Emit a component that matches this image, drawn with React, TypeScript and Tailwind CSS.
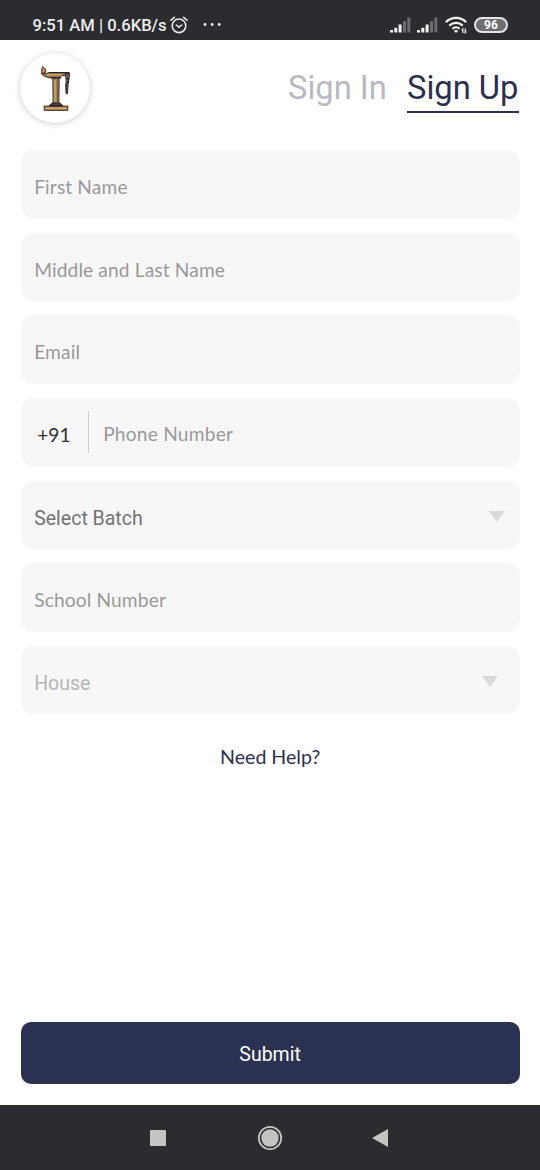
import type { ReactNode } from 'react';

function Signal() {
  return (
    <svg width="21" height="16" viewBox="0 0 21 16">
      <g fill="#f2f2f3">
        <rect x="0" y="13" width="3" height="2.5" />
        <rect x="4.3" y="10.8" width="3" height="4.7" />
        <rect x="8.6" y="7.5" width="3" height="8" />
      </g>
      <g fill="#6a6b6f">
        <rect x="13" y="4" width="3" height="11.5" />
        <rect x="17.3" y="0.5" width="3" height="15" />
      </g>
    </svg>
  );
}

function StatusBar() {
  return (
    <div className="flex h-10 shrink-0 items-center bg-[#2b2c30] pt-[10px] pl-[32.5px] text-[#ececee]">
      <span className="w-[134px] pt-[2px] whitespace-nowrap font-['Roboto',sans-serif] text-[16.6px] leading-5 font-medium">
        9:51 AM | 0.6KB/s
      </span>
      <svg className="ml-[3.5px]" width="18" height="18" viewBox="0 0 18 18" fill="none" stroke="#e6e6e8" strokeWidth="1.6" strokeLinecap="round">
        <circle cx="9" cy="9.8" r="6.8" />
        <path d="M1 4.2 4.4 1.3M17 4.2l-3.4-2.9M6.3 9 9 11.2 11.7 9" />
      </svg>
      <svg className="ml-[15px]" width="20" height="18" viewBox="0 0 20 18" fill="#ececee">
        <circle cx="2" cy="8.5" r="1.4" />
        <circle cx="9.2" cy="8.5" r="1.4" />
        <circle cx="16.2" cy="8.5" r="1.4" />
      </svg>
      <div className="ml-auto flex items-center">
        <Signal />
        <span className="w-[6px]" />
        <Signal />
        <svg className="ml-[7px]" width="23" height="18" viewBox="0 0 23 18" fill="none" stroke="#f2f2f3" strokeWidth="2.2">
          <path d="M0.8 6.2C6.6.5 15.5.5 21.2 6.2" />
          <path d="M4.3 9.6c4-3.7 9.6-3.7 13.4 0" />
          <path d="M7.5 12.8c2-2 5-2 7 0" />
          <path d="m11 16.9-2.2-2.2c1.2-1 3.2-1 4.4 0z" fill="#f2f2f3" stroke="none" />
          <path d="M17.8 17v-4l-1 1.3M20.2 12.5v4.2l1-1.3" strokeWidth="1.2" />
        </svg>
        <div className="mr-8 ml-[6px] flex h-4 w-[34px] items-center justify-center rounded-full border-2 border-[#e4e4e6] bg-[#6d6e72] font-['Roboto',sans-serif] text-[12px] leading-none font-bold text-white">
          96
        </div>
      </div>
    </div>
  );
}

function Logo() {
  return (
    <div className="mt-[13px] flex size-[70px] items-center justify-center rounded-full bg-white shadow-[0_1px_6px_rgba(0,0,0,0.2)]">
      <svg width="32" height="46" viewBox="0 0 32 46">
        <g stroke="#30242a" strokeWidth="0.9" strokeLinejoin="round">
          <path d="M3.2 8.2C1.8 5.8 3 4.2 3.6 1.5 5 3.6 5.2 4.4 6.4 3.6 7.2 5.5 6.6 7 6 8.2z" fill="#c98a4e" />
          <path d="M2 8.4h5.5L9.5 7.5h20.8v3.2H22l-2 2.2H11C7.5 12.4 4 11 2 8.4z" fill="#a07d4e" />
          <path d="M26.3 8.5h4.2l-.6 6.5-.8 4.5-.6 9-1.3.5-.5-8.5.5-5z" fill="#6e5d52" />
          <path d="M13.8 13h6.4l-.3 25h-5.8z" fill="#a5834f" />
          <path d="M11 40.3 13 38h8l2 2.3z" fill="#58443d" />
          <path d="M5.2 41h23.6v4.4H5.2z" fill="#b28c53" />
        </g>
        <path d="M16.1 15v22" stroke="#c8a871" strokeWidth="1.4" />
        <path d="M18.8 14v24" stroke="#6b5140" strokeWidth="1" />
        <path d="M8 9.6h15M7 43.4h20" stroke="#d0a768" strokeWidth="1.1" />
        <path d="M10 40.8h14M11.5 12.6h11M10 7.6h20" stroke="#29232d" strokeWidth="1.4" />
        <path d="M29 12.5v6M27.6 19.5v8" stroke="#2c2935" strokeWidth="1.7" strokeDasharray="2.4 1" />
      </svg>
    </div>
  );
}

function Field({ children }: { children: ReactNode }) {
  return (
    <div className="flex h-[68.6px] items-center rounded-[13px] bg-[#f7f7f7] pl-[13.6px] text-[19.2px] leading-6">
      {children}
    </div>
  );
}

function Placeholder({ children }: { children: ReactNode }) {
  return <span className="mt-[5px] font-['Lato',sans-serif] tracking-[0.12px] text-[#999]">{children}</span>;
}

function Caret() {
  return (
    <svg width="16" height="11" viewBox="0 0 16 11" fill="#d9d9d9">
      <path d="M0 0h16L8 11z" />
    </svg>
  );
}

export default function App() {
  return (
    <div className="flex h-[1170px] w-[540px] flex-col overflow-hidden bg-white">
      <StatusBar />
      <header className="flex h-[110.3px] shrink-0 items-start justify-between pr-[21px] pl-5 font-['Roboto',sans-serif]">
        <Logo />
        <nav className="flex gap-[21px] pt-[28px] text-[32.7px] leading-10 whitespace-nowrap">
          <span className="w-[98px] text-[#b8b9c3]">Sign In</span>
          <span className="h-[45px] w-[112px] border-b-2 border-[#2b3050] text-[#2b3050]">Sign Up</span>
        </nav>
      </header>
      <main className="flex flex-1 flex-col pr-[20.4px] pl-[20.6px]">
        <div className="flex flex-col gap-[14px]">
          <Field><Placeholder>First Name</Placeholder></Field>
          <Field><Placeholder>Middle and Last Name</Placeholder></Field>
          <Field><Placeholder>Email</Placeholder></Field>
          <Field>
            <span className="mt-[6px] ml-[3px] w-[51px] font-['Lato',sans-serif] text-[#303030]">+91</span>
            <span className="h-[42px] w-px bg-[#cccccc]" />
            <span className="mt-[3px] ml-[14px] font-['Lato',sans-serif] tracking-[0.2px] text-[#999]">Phone Number</span>
          </Field>
          <Field>
            <span className="mt-[8px] flex-1 font-['Roboto',sans-serif] text-[19.5px] text-[#737373]">Select Batch</span>
            <span className="mt-[3px] mr-[15px]"><Caret /></span>
          </Field>
          <Field><Placeholder>School Number</Placeholder></Field>
          <Field>
            <span className="mt-[8px] flex-1 font-['Roboto',sans-serif] text-[19.5px] text-[#b5b5b5]">House</span>
            <span className="mt-[3px] mr-[22px]"><Caret /></span>
          </Field>
        </div>
        <div className="mt-[31px] text-center font-['Lato',sans-serif] text-[19.6px] leading-6 text-[#2b3050]">Need Help?</div>
        <button className="mt-auto mb-[20.6px] h-[62px] w-full rounded-[10px] bg-[#2b3150] pt-[2px] font-['Roboto',sans-serif] text-[19.5px] text-white">
          Submit
        </button>
      </main>
      <footer className="flex h-[65px] shrink-0 items-center bg-[#2b2c30] pl-[150px]">
        <span className="size-4 rounded-[1px] bg-[#c4c4c4]" />
        <svg className="ml-[91px]" width="26" height="26" viewBox="0 0 26 26">
          <circle cx="13" cy="13" r="11.2" fill="none" stroke="#c4c4c4" strokeWidth="1.8" />
          <circle cx="13" cy="13" r="8.7" fill="#c4c4c4" />
        </svg>
        <svg className="ml-[89px]" width="16" height="18" viewBox="0 0 16 18" fill="#c4c4c4">
          <path d="M16 0v18L0 9z" />
        </svg>
      </footer>
    </div>
  );
}
